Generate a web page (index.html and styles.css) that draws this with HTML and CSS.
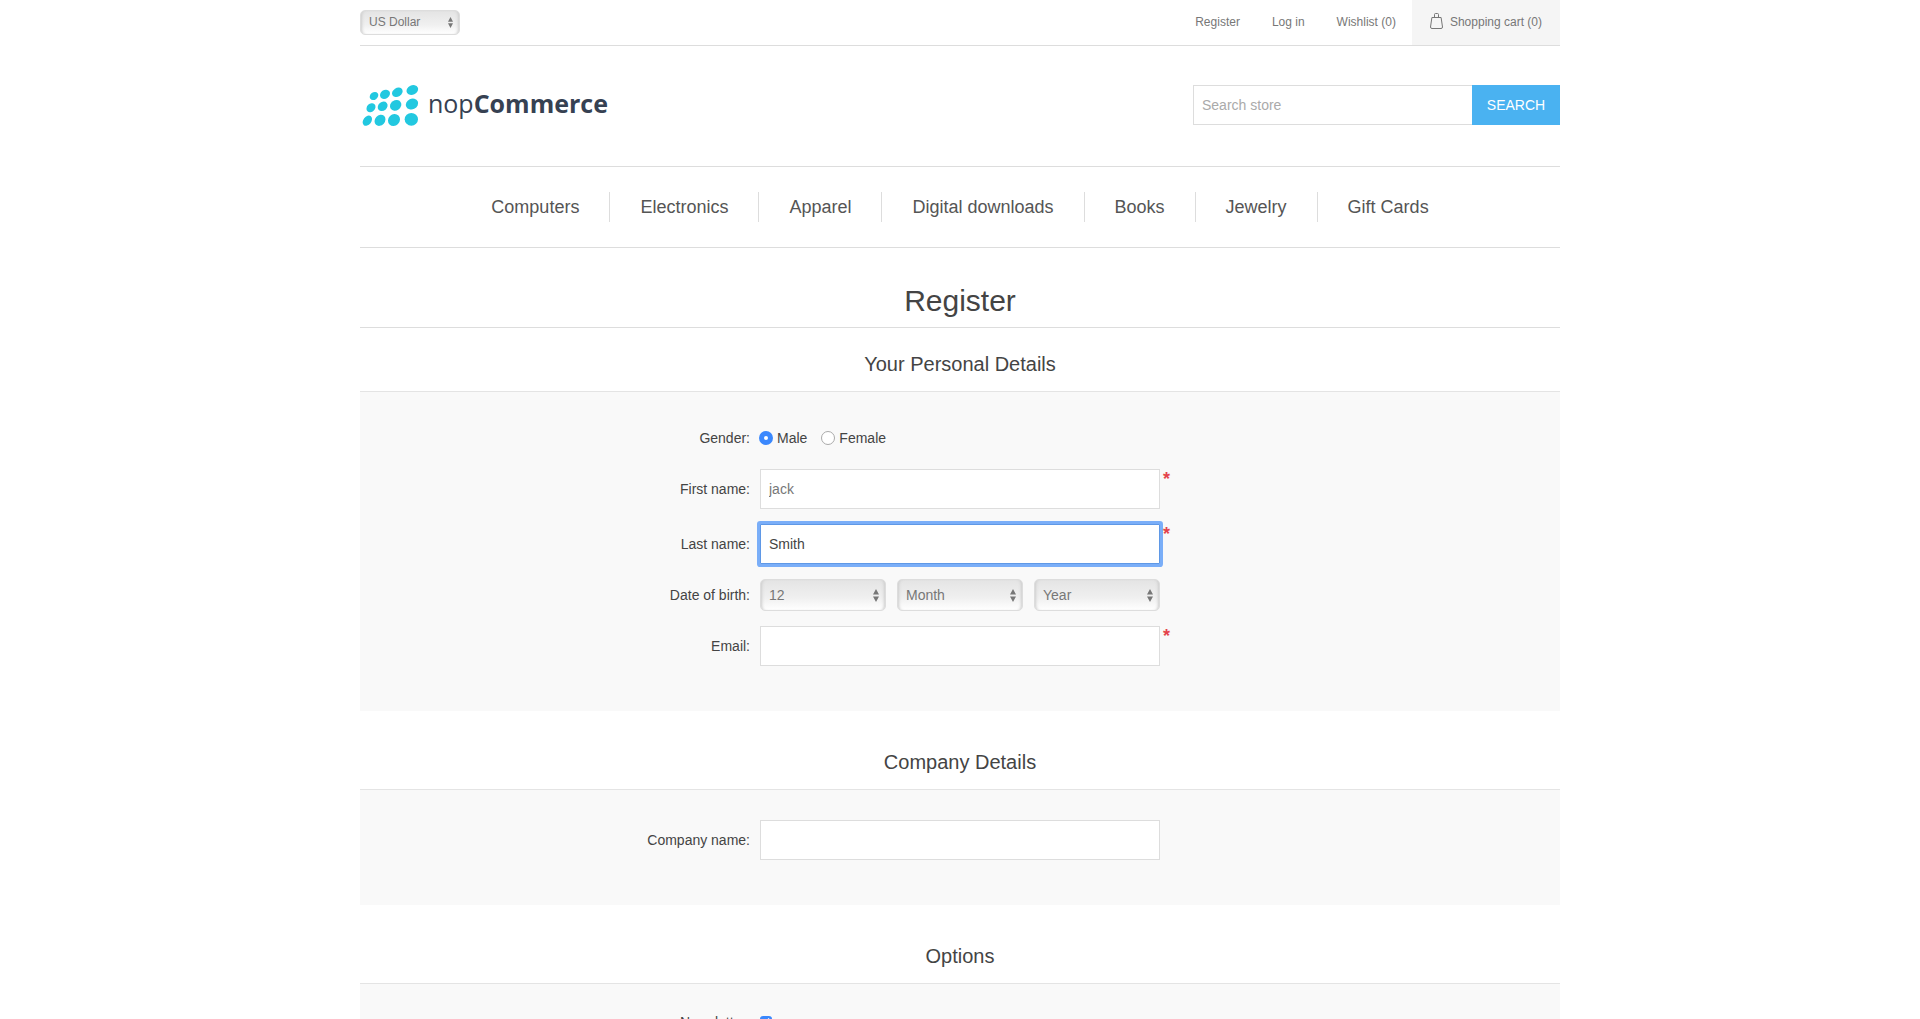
FILE: index.html
```html
<!DOCTYPE html>
<html lang="en">
<head>
  <meta charset="utf-8">
  <meta name="viewport" content="width=device-width, initial-scale=1">
  <title>nopCommerce demo store. Register</title>
  <link rel="stylesheet" href="styles.css">
</head>
<body>
  <div class="page">
    <header>
      <div class="topbar">
        <select class="select select-small" aria-label="Currency">
          <option>US Dollar</option>
          <option>Euro</option>
        </select>
        <nav class="account" aria-label="Account">
          <a href="#register">Register</a>
          <a href="#login">Log in</a>
          <a href="#wishlist">Wishlist (0)</a>
          <a class="cart" href="#cart">
            <svg class="bag" viewBox="0 0 14 18" width="14" height="18" aria-hidden="true">
              <path d="M1.900 5.500h9.200l1.400 9.500q0 1.500-1.500 1.500h-9q-1.500 0-1.500-1.500zM4.500 5.500v-3q0-1 1-1h2q1 0 1 1v3" fill="none" stroke="#777" stroke-width="1"/>
            </svg>
            Shopping cart (0)
          </a>
        </nav>
      </div>
      <div class="masthead">
        <a class="logo" href="#home">
          <svg viewBox="30 255 180 126" width="60" height="42" fill="#22c8e0" aria-hidden="true">
            <ellipse cx="72" cy="288" rx="14" ry="11" transform="rotate(-38 72 288)"/>
            <ellipse cx="105" cy="283" rx="16" ry="13" transform="rotate(-36 105 283)"/>
            <ellipse cx="142" cy="277" rx="17" ry="13" transform="rotate(-32 142 277)"/>
            <ellipse cx="187" cy="270" rx="18" ry="14" transform="rotate(-25 187 270)"/>
            <ellipse cx="63" cy="323" rx="15" ry="12" transform="rotate(-45 63 323)"/>
            <ellipse cx="98" cy="319" rx="16" ry="13" transform="rotate(-40 98 319)"/>
            <ellipse cx="137" cy="316" rx="18" ry="15" transform="rotate(-35 137 316)"/>
            <ellipse cx="186" cy="312" rx="19" ry="16" transform="rotate(-25 186 312)"/>
            <ellipse cx="52" cy="362" rx="17" ry="12" transform="rotate(-52 52 362)"/>
            <ellipse cx="90" cy="361" rx="18" ry="15" transform="rotate(-48 90 361)"/>
            <ellipse cx="132" cy="360" rx="19" ry="17" transform="rotate(-45 132 360)"/>
            <ellipse cx="184" cy="358" rx="20" ry="19"/>
          </svg>
          <span class="wordmark">nop<b>Commerce</b></span>
        </a>
        <form class="search">
          <input class="field" type="text" placeholder="Search store" aria-label="Search store">
          <button type="button">SEARCH</button>
        </form>
      </div>
      <nav class="menu" aria-label="Categories">
        <a href="#computers">Computers</a>
        <a href="#electronics">Electronics</a>
        <a href="#apparel">Apparel</a>
        <a href="#downloads">Digital downloads</a>
        <a href="#books">Books</a>
        <a href="#jewelry">Jewelry</a>
        <a href="#giftcards">Gift Cards</a>
      </nav>
    </header>
    <main>
      <h1>Register</h1>
      <form>
        <section>
          <h2>Your Personal Details</h2>
          <div class="panel">
            <div class="row">
              <span class="label" id="gender">Gender:</span>
              <div class="choices" role="radiogroup" aria-labelledby="gender">
                <input class="radio" type="radio" name="gender" id="male" checked>
                <label for="male">Male</label>
                <input class="radio" type="radio" name="gender" id="female">
                <label for="female">Female</label>
              </div>
            </div>
            <div class="row">
              <label class="label" for="first">First name:</label>
              <input class="field" type="text" id="first" value="jack">
              <span class="required">*</span>
            </div>
            <div class="row">
              <label class="label" for="last">Last name:</label>
              <input class="field field-active" type="text" id="last" value="Smith">
              <span class="required">*</span>
            </div>
            <div class="row">
              <span class="label" id="birth">Date of birth:</span>
              <div class="dates" role="group" aria-labelledby="birth">
                <select class="select" aria-label="Day"><option>12</option></select>
                <select class="select" aria-label="Month"><option>Month</option></select>
                <select class="select" aria-label="Year"><option>Year</option></select>
              </div>
            </div>
            <div class="row">
              <label class="label" for="email">Email:</label>
              <input class="field" type="email" id="email">
              <span class="required">*</span>
            </div>
          </div>
        </section>
        <section>
          <h2>Company Details</h2>
          <div class="panel">
            <div class="row">
              <label class="label" for="company">Company name:</label>
              <input class="field" type="text" id="company">
            </div>
          </div>
        </section>
        <section>
          <h2>Options</h2>
          <div class="panel">
            <div class="row row-compact">
              <label class="label" for="newsletter">Newsletter:</label>
              <input class="check" type="checkbox" id="newsletter" checked>
            </div>
          </div>
        </section>
      </form>
    </main>
  </div>
</body>
</html>
```
FILE: styles.css
```css
* {
  box-sizing: border-box;
}

html {
  scrollbar-width: none;
}

body {
  margin: 0;
  background: #fff;
  color: #444;
  font: 14px/20px "Liberation Sans", Arial, sans-serif;
}

a {
  color: inherit;
  text-decoration: none;
}

input,
select,
button {
  margin: 0;
  font: inherit;
}

.page {
  max-width: 1200px;
  margin: 0 auto;
}

/* Header */
.topbar {
  display: flex;
  justify-content: space-between;
  align-items: center;
  border-bottom: 1px solid #ddd;
  font-size: 12px;
  color: #777;
}

.account {
  display: flex;
  line-height: 45px;
}

.account a {
  padding: 0 16px;
}

.account .cart {
  display: flex;
  align-items: center;
  gap: 6px;
  padding: 0 18px;
  background: #f5f5f5;
}

.bag {
  margin-bottom: 4px;
}

.masthead {
  display: flex;
  justify-content: space-between;
  align-items: flex-start;
  padding: 39px 0 41px;
}

.logo {
  display: flex;
  gap: 8px;
  height: 40px;
}

.wordmark {
  color: #364152;
  font: 25px/36px "Open Sans", sans-serif;
}

.search {
  display: flex;
}

.search .field {
  width: 279px;
  border-right: 0;
}

.search button {
  width: 88px;
  padding: 0;
  border: 0;
  background: #4ab2f1;
  color: #fff;
}

.menu {
  display: flex;
  justify-content: center;
  padding: 25px 0;
  border: solid #ddd;
  border-width: 1px 0;
  color: #555;
  font-size: 18px;
  line-height: 30px;
}

.menu a {
  padding: 0 30px;
}

.menu a + a {
  border-left: 1px solid #ddd;
}

/* Controls */
.field {
  width: 400px;
  height: 40px;
  padding: 0 8px;
  border: 1px solid #ddd;
  background: #fff;
  color: #777;
}

.field:focus {
  outline: none;
}

.field::placeholder {
  color: #aaa;
}

.field-active {
  border-color: #5f98e6;
  border-radius: 1px;
  box-shadow: 0 0 0 3px #7aaef8;
  color: #444;
}

.select {
  appearance: none;
  height: 32px;
  padding: 0 8px;
  border: 1px solid #ddd;
  border-radius: 5px;
  background:
    url("data:image/svg+xml,%3Csvg xmlns='http://www.w3.org/2000/svg' width='6' height='13'%3E%3Cpath d='M0 5.500L3 0l3 5.500zM0 7.500L3 13l3-5.500z' fill='%23777'/%3E%3C/svg%3E") no-repeat right 6px center,
    linear-gradient(#e4e4e4, #f0f0f0 60%, #fff);
  box-shadow: inset 3px 0 3px -2px #ccc, inset -3px 0 3px -2px #ccc;
  color: #777;
}

.select-small {
  width: 100px;
  height: 25px;
  padding-bottom: 2px;
  background-size: 5px 11px, auto;
}

.radio,
.check {
  appearance: none;
  flex: none;
  width: 14px;
  height: 14px;
  border: 1px solid #aaa;
  border-radius: 50%;
  background: #fff;
}

.radio:checked {
  border: 5px solid #3b88fd;
}

.check {
  width: 12px;
  height: 12px;
  border: 0;
  border-radius: 3px;
  background: #3b88fd url("data:image/svg+xml,%3Csvg xmlns='http://www.w3.org/2000/svg' width='12' height='12'%3E%3Cpath d='M3 6.500l2 2.500 4-6.500' fill='none' stroke='white' stroke-width='1.500'/%3E%3C/svg%3E");
}

/* Registration form */
h1 {
  margin: 0;
  padding: 33px 0 6px;
  border-bottom: 1px solid #ddd;
  font-size: 30px;
  font-weight: 400;
  line-height: 40px;
  text-align: center;
}

h2 {
  margin: 0;
  padding: 21px 0 12px;
  border-bottom: 1px solid #e4e4e4;
  font-size: 20px;
  font-weight: 400;
  line-height: 30px;
  text-align: center;
}

section + section h2 {
  padding-top: 36px;
}

.panel {
  display: flex;
  flex-direction: column;
  gap: 15px;
  padding: 30px 0 45px;
  background: #f9f9f9;
}

.row {
  display: grid;
  grid-template-columns: 1fr 400px 1fr;
  align-items: center;
  min-height: 32px;
}

.row-compact {
  min-height: 16px;
  line-height: 16px;
}

.label {
  padding-right: 10px;
  text-align: right;
}

.required {
  align-self: start;
  padding-left: 3px;
  color: #e4434b;
  font-size: 18px;
  font-weight: 700;
}

.choices {
  display: flex;
  align-items: center;
  gap: 4px;
  margin-left: -1px;
}

.choices label {
  padding-right: 10px;
}

.dates {
  display: grid;
  grid-template-columns: repeat(3, 1fr);
  gap: 11px;
}
```
